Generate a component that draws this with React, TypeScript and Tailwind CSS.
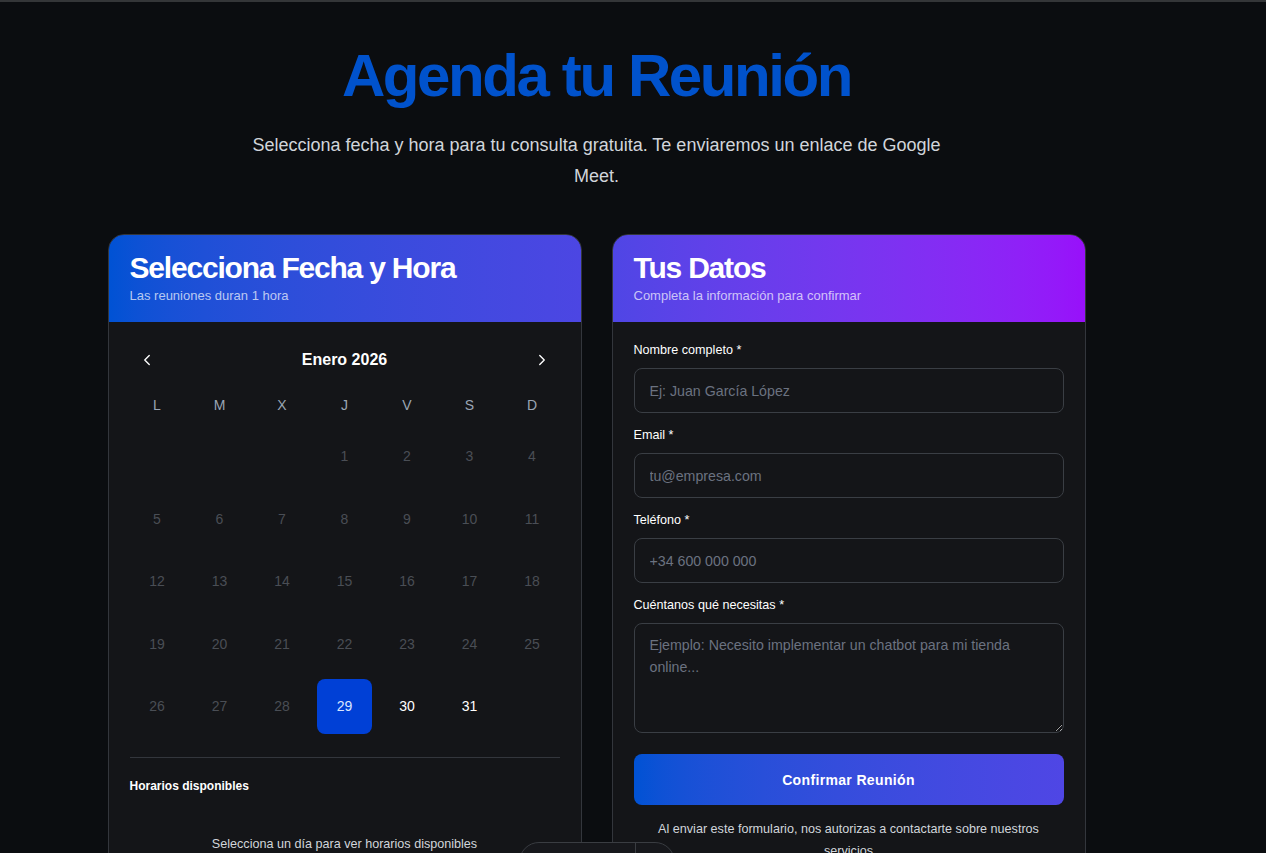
import { ChevronLeft, ChevronRight } from "lucide-react";

const WEEKDAYS = ["L", "M", "X", "J", "V", "S", "D"];

// enero 2026 empieza en jueves
const LEAD = 3;
const DAYS = 31;
const TODAY = 29;

function Calendar() {
  const cells: (number | null)[] = [
    ...Array.from({ length: LEAD }, () => null),
    ...Array.from({ length: DAYS }, (_, i) => i + 1),
  ];

  return (
    <div className="px-[21px] pt-[22px]">
      <div className="flex h-8 items-center justify-between px-[8px] mb-[13px]">
        <button className="text-white">
          <ChevronLeft size={18} strokeWidth={1.8} />
        </button>
        <span className="text-base font-bold text-white">Enero 2026</span>
        <button className="text-white">
          <ChevronRight size={18} strokeWidth={1.8} />
        </button>
      </div>

      <div className="grid grid-cols-7 gap-x-[7.5px] mb-[7.5px]">
        {WEEKDAYS.map((d) => (
          <div
            key={d}
            className="h-8 flex items-center justify-center text-sm font-medium text-[#9aa5b4]"
          >
            {d}
          </div>
        ))}
      </div>

      <div className="grid grid-cols-7 gap-[7.5px]">
        {cells.map((day, i) => {
          if (day === null) return <div key={`e${i}`} className="aspect-square" />;
          const selected = day === TODAY;
          const past = day < TODAY;
          return (
            <div
              key={day}
              className={`aspect-square flex items-center justify-center rounded-lg text-sm ${
                selected
                  ? "bg-[#0040d6] text-[#dbe6ff] font-medium"
                  : past
                  ? "text-[#4a4e55]"
                  : "text-white font-medium"
              }`}
            >
              {day}
            </div>
          );
        })}
      </div>

      <div className="mt-[23px] border-t border-[#33363c] pt-[19px]">
        <p className="text-xs leading-[18px] font-bold text-white">Horarios disponibles</p>
        <p className="mt-[40px] text-center text-[12.6px] text-[#d1d5db]">
          Selecciona un día para ver horarios disponibles
        </p>
      </div>
    </div>
  );
}

function Field({
  label,
  placeholder,
  area,
}: {
  label: string;
  placeholder: string;
  area?: boolean;
}) {
  return (
    <div>
      <label className="block h-5 text-[12.6px] leading-5 font-medium text-white mb-2">{label}</label>
      {area ? (
        <textarea
          placeholder={placeholder}
          className="block w-full h-[110px] rounded-lg border border-[#3a3e44] bg-[#141518] px-[15px] py-[10px] text-[14.2px] leading-[22px] text-white placeholder:text-[#6b7280] outline-none"
        />
      ) : (
        <input
          placeholder={placeholder}
          className="block w-full h-[45px] rounded-lg border border-[#3a3e44] bg-[#141518] px-[15px] text-[14.2px] text-white placeholder:text-[#6b7280] outline-none"
        />
      )}
    </div>
  );
}

function CardHeader({ title, sub, tone }: { title: string; sub: string; tone: string }) {
  return (
    <div className={`${tone} px-[21px] pt-[15px] pb-[18px]`}>
      <h2 className="text-3xl leading-9 font-bold tracking-[-0.04em] text-white">{title}</h2>
      <p className="mt-[2px] text-[13px] leading-4 text-white/70">{sub}</p>
    </div>
  );
}

export default function App() {
  return (
    <div
      className="min-h-[853px] bg-[#0b0d10] border-t-2 border-[#343638] overflow-hidden"
      style={{ fontFamily: '"Liberation Sans", Arial, sans-serif' }}
    >
      <div className="w-[1193px] pt-[44px] flex flex-col items-center">
        <h1 className="text-6xl leading-none font-bold tracking-[-0.04em] text-[#0052cc]">
          Agenda tu Reunión
        </h1>
        <p className="mt-[24px] max-w-[700px] text-center text-lg leading-[31px] text-[#d1d5db]">
          Selecciona fecha y hora para tu consulta gratuita. Te enviaremos un enlace de Google Meet.
        </p>

        <div className="mt-[42px] flex gap-[30px] items-start">
          {/* calendario */}
          <div className="w-[474px] h-[700px] rounded-2xl border border-[#33363c] bg-[#141518] overflow-hidden">
            <CardHeader
              title="Selecciona Fecha y Hora"
              sub="Las reuniones duran 1 hora"
              tone="bg-gradient-to-r from-[#0052d4] to-[#4c46e3]"
            />
            <Calendar />
          </div>

          {/* formulario */}
          <div className="w-[474px] h-[700px] rounded-2xl border border-[#33363c] bg-[#141518] overflow-hidden">
            <CardHeader
              title="Tus Datos"
              sub="Completa la información para confirmar"
              tone="bg-gradient-to-r from-[#4f46e5] to-[#9810fa]"
            />
            <div className="px-[21px] pt-[18px] flex flex-col gap-3">
              <Field label="Nombre completo *" placeholder="Ej: Juan García López" />
              <Field label="Email *" placeholder="tu@empresa.com" />
              <Field label="Teléfono *" placeholder="+34 600 000 000" />
              <Field
                label="Cuéntanos qué necesitas *"
                placeholder="Ejemplo: Necesito implementar un chatbot para mi tienda online..."
                area
              />
              <button className="mt-[9px] h-[51px] w-full rounded-lg bg-gradient-to-r from-[#0052d4] to-[#4f46e5] text-sm font-bold tracking-wide text-white">
                Confirmar Reunión
              </button>
              <p className="mt-[1px] px-4 text-center text-[12.6px] leading-[22px] text-[#d1d5db]">
                Al enviar este formulario, nos autorizas a contactarte sobre nuestros servicios
              </p>
            </div>
          </div>
        </div>
      </div>

      {/* barra flotante */}
      <div className="fixed left-[519px] top-[842px] flex h-[40px] w-[156px] rounded-full border border-[#3a3d42] bg-[#17181c]">
        <div className="flex flex-1 items-center gap-2 pl-4">
          <span className="h-2 w-6 rounded bg-[#2a2c31]" />
          <span className="ml-auto mr-3 h-2 w-2 rounded-full bg-[#7a2145]" />
        </div>
        <div className="w-[39px] border-l border-[#3a3d42]" />
      </div>
    </div>
  );
}
